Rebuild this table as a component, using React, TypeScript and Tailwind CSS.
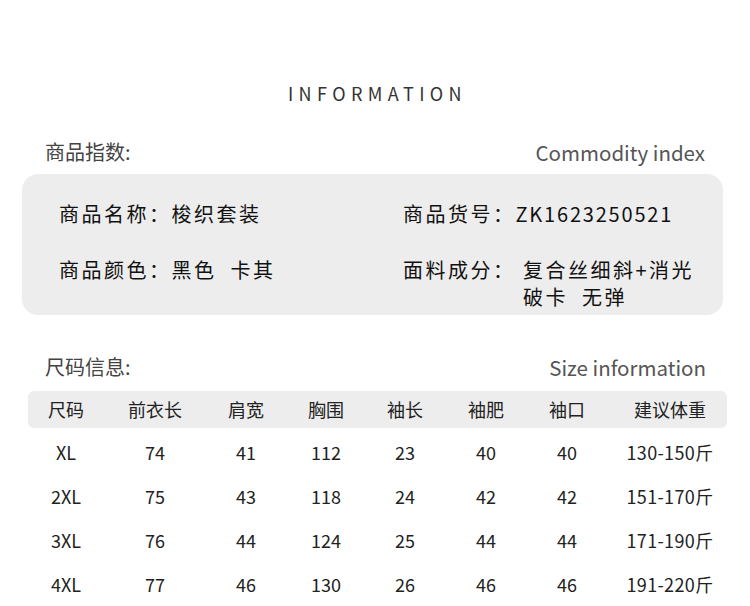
const font = { fontFamily: '"Noto Sans CJK SC", "Noto Sans", sans-serif' }

const headers = ['尺码', '前衣长', '肩宽', '胸围', '袖长', '袖肥', '袖口', '建议体重']

const rows = [
  ['XL', '74', '41', '112', '23', '40', '40', '130-150斤'],
  ['2XL', '75', '43', '118', '24', '42', '42', '151-170斤'],
  ['3XL', '76', '44', '124', '25', '44', '44', '171-190斤'],
  ['4XL', '77', '46', '130', '26', '46', '46', '191-220斤'],
]

const cols = 'grid grid-cols-[76px_102px_80px_80px_78px_84px_78px_121px]'

export default function App() {
  return (
    <main className="w-[750px] h-[606px] bg-white text-[#222] overflow-hidden" style={font}>
      <div className="pt-[79px] flex justify-center">
        <h1 className="text-[18px] leading-[28px] tracking-[0.3em] pl-[5px] text-[#333]">INFORMATION</h1>
      </div>

      <div className="mt-[30px] flex justify-between items-center pl-[45px] pr-[45px] h-[30px]">
        <span className="text-[20px] text-[#444]">商品指数:</span>
        <span className="text-[20.5px] text-[#555]">Commodity index</span>
      </div>

      <section className="ml-[22px] mt-[7px] w-[701px] h-[141px] rounded-[16px] bg-[#ededed] pt-[26px] pl-[37px] text-[20px] tracking-[2.5px] text-[#111]">
        <div className="flex h-[28px] items-center">
          <span className="w-[344px]">商品名称：梭织套装</span>
          <span>
            商品货号：<span className="tracking-[1.8px]">ZK1623250521</span>
          </span>
        </div>
        <div className="flex mt-[28px]">
          <span className="w-[344px] leading-[28px]">商品颜色：黑色&nbsp;&nbsp;卡其</span>
          <div className="flex leading-[27px]">
            <span className="w-[120px]">面料成分：</span>
            <span>复合丝细斜+消光<br />破卡&nbsp;&nbsp;无弹</span>
          </div>
        </div>
      </section>

      <div className="mt-[38px] flex justify-between items-center pl-[45px] pr-[44px] h-[28px]">
        <span className="text-[20px] text-[#444]">尺码信息:</span>
        <span className="text-[20.5px] text-[#555]">Size information</span>
      </div>

      <section className="mx-[28px] mt-[10px] w-[699px] text-[18px] text-[#222]">
        <div className={`${cols} h-[37px] items-center rounded-[6px] bg-[#ededed]`}>
          {headers.map((h, i) => (
            <span key={h} className={i === 7 ? 'text-center pl-[7px]' : 'text-center'}>{h}</span>
          ))}
        </div>
        <div className="pt-[2px]">
          {rows.map((r) => (
            <div key={r[0]} className={`${cols} h-[44px] items-center`}>
              {r.map((c, i) => (
                <span key={i} className={i === 7 ? 'text-center pl-[7px] tracking-[0.02em]' : 'text-center'}>{c}</span>
              ))}
            </div>
          ))}
        </div>
      </section>
    </main>
  )
}
